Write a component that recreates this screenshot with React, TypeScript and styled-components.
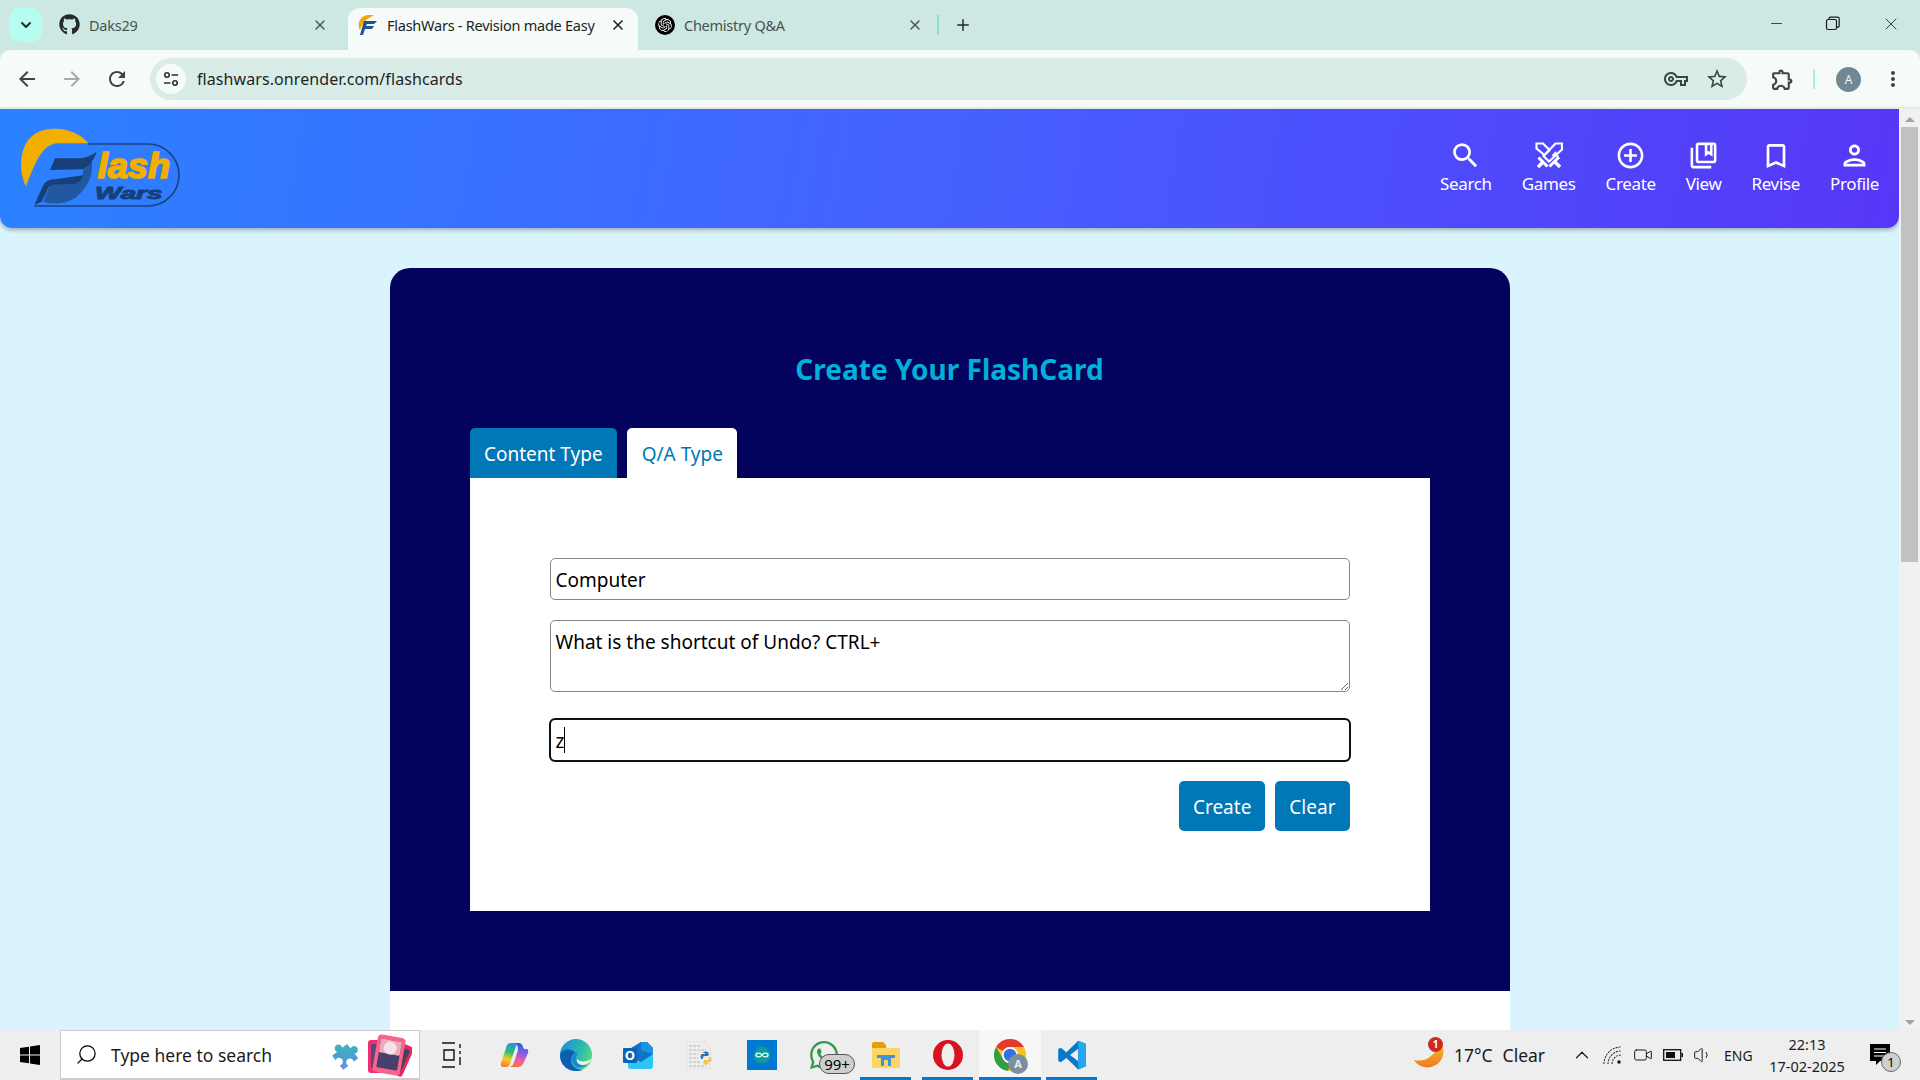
import React, { FunctionComponent, ReactNode } from 'react';
import styled, { createGlobalStyle } from 'styled-components';
import {
  MdAddCircleOutline, MdArrowBack, MdArrowForward, MdBookmarkBorder, MdOutlineCollectionsBookmark,
  MdOutlineExtension, MdOutlinePerson, MdOutlineVpnKey, MdMoreVert, MdRefresh, MdSearch, MdStarBorder,
} from 'react-icons/md';
import { FaGithub, FaWhatsapp } from 'react-icons/fa';
import { SiOpenai } from 'react-icons/si';
import {
  ChevronDown, ChevronUp, Minus, Plus, Search as SearchIcon, Video, Volume1, X,
} from 'lucide-react';

const uiFont = '"Noto Sans", "Open Sans", Arial, sans-serif';

const GlobalStyle = createGlobalStyle`
  html, body {
    margin: 0;
    padding: 0;
    overflow: hidden;
    font-family: ${uiFont};
  }
  * { box-sizing: border-box; }
`;

const Screen = styled.div`
  width: 1920px;
  height: 1080px;
  display: flex;
  flex-direction: column;
  overflow: hidden;
  background: #cde8e2;
`;

/* Browser chrome */
const TabStrip = styled.div`
  height: 50px;
  flex: none;
  display: flex;
  align-items: flex-end;
  padding-left: 9px;
  color: #1f2d2a;
`;

const TabListButton = styled.div`
  width: 33px;
  height: 34px;
  margin-bottom: 8px;
  margin-right: 5px;
  border-radius: 10px;
  background: #b6fdf1;
  display: flex;
  align-items: center;
  justify-content: center;
`;

const Tab = styled.div<{ $active?: boolean; $width: number; $left: number; $right: number }>`
  width: ${(p) => p.$width}px;
  height: 42px;
  display: flex;
  align-items: center;
  padding: 0 ${(p) => p.$right}px 9px ${(p) => p.$left}px;
  border-radius: 12px 12px 0 0;
  background: ${(p) => (p.$active ? '#f6fbf9' : 'transparent')};
  font-size: 14.5px;
  letter-spacing: -0.25px;
  color: ${(p) => (p.$active ? '#1c2422' : '#46544f')};
`;

const TabTitle = styled.span`
  flex: 1;
  margin-left: 9px;
  white-space: nowrap;
`;

const TabDivider = styled.div`
  width: 2px;
  height: 20px;
  margin: 0 15px 15px 3px;
  background: #8fdcd2;
`;

const NewTab = styled.div`
  margin-bottom: 16px;
  display: flex;
`;

const WindowControls = styled.div`
  margin-left: auto;
  height: 47px;
  align-self: flex-start;
  display: flex;
  align-items: center;
  gap: 40px;
  padding-right: 19px;
`;

const RestoreIcon = () => (
  <svg width="16" height="16" viewBox="0 0 16 16" fill="none" stroke="#1b1b1b" strokeWidth="1.2">
    <rect x="1.5" y="3.5" width="10" height="10" rx="1.5" />
    <path d="M4 3.2V2.6a1.4 1.4 0 0 1 1.4-1.4h7.2a1.6 1.6 0 0 1 1.6 1.6v7a1.4 1.4 0 0 1-1.4 1.4H12" />
  </svg>
);

const Toolbar = styled.div`
  height: 59px;
  flex: none;
  display: flex;
  align-items: flex-start;
  padding: 8px 0 0 15px;
  background: #f6fbf9;
  border-radius: 10px 10px 0 0;
  border-bottom: 2px solid #e3e9e7;
`;

const NavIcons = styled.div`
  width: 135px;
  height: 42px;
  flex: none;
  display: flex;
  align-items: center;
  gap: 21px;
`;

const Omnibox = styled.div`
  width: 1597px;
  height: 42px;
  flex: none;
  display: flex;
  align-items: center;
  padding: 0 18px 0 6px;
  border-radius: 21px;
  background: #daece7;
`;

const SiteInfo = styled.div`
  width: 30px;
  height: 30px;
  flex: none;
  border-radius: 50%;
  background: #f6fbf9;
  display: flex;
  align-items: center;
  justify-content: center;
`;

const UrlText = styled.span`
  margin-left: 11px;
  flex: 1;
  font-size: 16px;
  letter-spacing: 0.08px;
  color: #1d2523;
`;

const OmniboxIcons = styled.div`
  display: flex;
  align-items: center;
  gap: 17px;
  color: #3b4643;
`;

const ToolbarEnd = styled.div`
  flex: 1;
  height: 42px;
  display: flex;
  align-items: center;
  padding-left: 23px;
  color: #3b4643;
`;

const ToolDivider = styled.div`
  width: 2px;
  height: 20px;
  margin: 0 21px 0 18px;
  background: #a5efe4;
`;

const Avatar = styled.div`
  width: 25px;
  height: 25px;
  margin-right: 20px;
  border-radius: 50%;
  background: #6f8893;
  color: #f0f4f4;
  font-size: 12px;
  display: flex;
  align-items: center;
  justify-content: center;
`;

const SiteTuneIcon = () => (
  <svg width="18" height="18" viewBox="0 0 18 18" fill="none" stroke="#27302e" strokeWidth="1.6">
    <circle cx="5" cy="5" r="2.2" />
    <path d="M9.5 5H16M2 13h6.5" />
    <circle cx="13" cy="13" r="2.2" />
  </svg>
);

const FlashFavicon = () => (
  <svg width="20" height="24" viewBox="0 0 20 24">
    <path d="M2 17A10 10 0 0 1 10 2h6l-5 3Q6 7 2 17z" fill="#eeaa0c" />
    <path d="M6 8h13l-3 3H9l-1 2h8l-2 3H7l-2 6H2z" fill="#1d5198" />
  </svg>
);

/* Web page */
const Viewport = styled.div`
  flex: 1;
  min-height: 0;
  display: flex;
  background: #d9f4fc;
`;

const Page = styled.div`
  flex: 1;
  min-width: 0;
  overflow: hidden;
`;

const Header = styled.header`
  height: 119px;
  display: flex;
  align-items: center;
  justify-content: space-between;
  padding: 0 20px 2px 16px;
  border-radius: 0 0 12px 12px;
  background: linear-gradient(100deg, #2b82ff 0%, #4560ff 50%, #5637f7 100%);
  box-shadow: 0 2px 4px rgba(0, 0, 0, 0.3);
`;

const NavList = styled.nav`
  display: flex;
  gap: 30px;
`;

const NavItem = styled.div`
  display: flex;
  flex-direction: column;
  align-items: center;
  color: #fff;
  font-size: 17px;
  line-height: 24px;
  letter-spacing: -0.35px;
`;

const NavGlyph = styled.span`
  height: 33px;
  display: flex;
  align-items: center;
  justify-content: center;
`;

const SwordsIcon = () => (
  <svg width="28" height="28" viewBox="0 0 28 28" fill="none" stroke="#fff" strokeWidth="2.2">
    <path d="M27 1.500h-6.500L8.500 14l5.500 5.500L27 7.500z" />
    <path d="M1.500 1.500h6.500l6.500 6.500-5 5-8-6.500z" />
    <path d="M17.500 14l3-3 3.500 6" />
    <path d="M3.500 15.500l9 9M23.500 15.500l-9 9" strokeWidth="3" />
    <path d="M8 20l-5 5M20 20l5 5" strokeWidth="3.400" />
  </svg>
);

/* drawn on the 3x grid of a 200x110 crop: one unit is a third of a pixel */
const LogoMark = () => (
  <svg width="167" height="85" viewBox="48 45 501 255">
    <path d="M78 228C50 170 55 55 165 56C210 56 245 75 265 100L170 100C125 105 105 160 78 228Z" fill="#f2af00" />
    <path d="M265 102H444A93 93 0 0 1 444 288H103" fill="none" stroke="#1a4480" strokeWidth="5" />
    <path d="M130 275L150 225L225 222Q248 205 250 180Q265 170 275 150Q285 215 225 265Q180 290 130 275Z" fill="#22589f" />
    <path d="M165 145L240 145Q270 140 290 125Q280 160 250 178L150 180Z" fill="#173f7a" />
    <path d="M103 285L130 225Q140 208 165 208L250 196Q245 215 225 222L155 225Q145 228 140 245L125 275Z" fill="#173f7a" />
    <Wordmark x="293" y="205" fontSize="104" fill="#f2af00" stroke="#f2af00" strokeWidth="5" textLength="217" lengthAdjust="spacingAndGlyphs">lash</Wordmark>
    <Wordmark x="285" y="268" fontSize="52" fill="#173f7a" stroke="#173f7a" strokeWidth="3" textLength="202" lengthAdjust="spacingAndGlyphs">Wars</Wordmark>
  </svg>
);

const Wordmark = styled.text`
  font-family: "Liberation Sans", Arial, sans-serif;
  font-weight: 700;
  font-style: italic;
`;

const Card = styled.section`
  width: 1120px;
  margin: 40px auto 0;
  padding: 80px 80px 80px;
  border-radius: 20px 20px 0 0;
  background: #03035e;
`;

const Title = styled.h1`
  margin: 0 0 36px;
  height: 44px;
  line-height: 42px;
  text-align: center;
  font-size: 28px;
  font-weight: 700;
  color: #00b0d8;
`;

const TabRow = styled.div`
  display: flex;
  gap: 10px;
`;

const FormTab = styled.div<{ $active?: boolean }>`
  height: 50px;
  padding: 2px 14.500px 0;
  display: flex;
  align-items: center;
  border-radius: 5px 5px 0 0;
  font-size: 19px;
  background: ${(p) => (p.$active ? '#fff' : '#0077b6')};
  color: ${(p) => (p.$active ? '#0077b6' : '#fff')};
`;

const Panel = styled.div`
  padding: 80px;
  background: #fff;
`;

const Form = styled.form`
  display: flex;
  flex-direction: column;
`;

const FieldWrap = styled.div`
  position: relative;
  margin-bottom: 20px;
`;

const TextInput = styled.input<{ $focused?: boolean }>`
  display: block;
  width: 100%;
  height: 42px;
  padding: 2px 5px 0;
  border: 1px solid #858585;
  border-radius: 5px;
  font-family: ${uiFont};
  font-size: 19px;
  color: #000;
  outline: ${(p) => (p.$focused ? '2px solid #101010' : 'none')};
  outline-offset: -1px;
`;

const TextArea = styled.textarea`
  display: block;
  width: 100%;
  height: 72px;
  margin-bottom: 27px;
  padding: 8px 5px;
  border: 1px solid #858585;
  border-radius: 5px;
  font-family: ${uiFont};
  font-size: 19px;
  line-height: 26px;
  color: #000;
  outline: none;
`;

const Caret = styled.span`
  position: absolute;
  left: 14px;
  top: 8px;
  width: 1px;
  height: 26px;
  background: #000;
`;

const FormActions = styled.div`
  display: flex;
  justify-content: flex-end;
  gap: 10px;
`;

const ActionButton = styled.button`
  height: 50px;
  padding: 2px 14px 0;
  border: none;
  border-radius: 5px;
  background: #0077b6;
  color: #fff;
  font-family: ${uiFont};
  font-size: 19px;
`;

const BelowCard = styled.div`
  width: 1120px;
  height: 200px;
  margin: 0 auto;
  background: #fff;
`;

const ScrollBar = styled.div`
  width: 21px;
  flex: none;
  display: flex;
  flex-direction: column;
  align-items: center;
  background: #f1f1f1;
`;

const ScrollArrow = styled.div<{ $down?: boolean }>`
  margin: ${(p) => (p.$down ? 'auto 0 5px' : '8px 0 5px')};
  width: 0;
  height: 0;
  border-left: 5px solid transparent;
  border-right: 5px solid transparent;
  border-${(p) => (p.$down ? 'top' : 'bottom')}: 5px solid #a3a3a3;
`;

const ScrollThumb = styled.div`
  width: 17px;
  height: 435px;
  background: #c1c1c1;
`;

/* Taskbar */
const Taskbar = styled.footer`
  height: 50px;
  flex: none;
  display: flex;
  align-items: center;
  background: #eeeeee;
`;

const StartButton = styled.div`
  width: 60px;
  display: flex;
  justify-content: center;
`;

const SearchBox = styled.div`
  width: 360px;
  height: 50px;
  display: flex;
  align-items: center;
  padding-left: 14px;
  background: #fff;
  border: 1px solid #ccc;
  border-bottom-width: 2px;
`;

const SearchLabel = styled.span`
  margin-left: 13px;
  flex: 1;
  font-size: 17.5px;
  color: #1b1b1b;
`;

const SearchExtras = styled.div`
  display: flex;
  align-items: center;
  gap: 3px;
  padding-right: 7px;
`;

const TaskSlot = styled.div<{ $running?: boolean; $active?: boolean; $width?: number }>`
  position: relative;
  width: ${(p) => p.$width ?? 62}px;
  height: 50px;
  flex: none;
  display: flex;
  align-items: center;
  justify-content: center;
  background: ${(p) => (p.$active ? '#f7f7f7' : 'transparent')};

  &::after {
    content: '';
    display: ${(p) => (p.$running ? 'block' : 'none')};
    position: absolute;
    bottom: 0;
    left: ${(p) => (p.$active ? 0 : 5)}px;
    right: ${(p) => (p.$active ? 0 : 6)}px;
    height: 3px;
    background: #0078d4;
  }
`;

const WhatsBadge = styled.span`
  position: absolute;
  left: 26px;
  top: 24px;
  width: 36px;
  height: 20px;
  border-radius: 10px;
  border: 1px solid #555;
  background: #cfcfcf;
  color: #000;
  font-size: 15px;
  line-height: 18px;
  text-align: center;
`;

const ChromeBadge = styled.span`
  position: absolute;
  left: 29px;
  top: 24px;
  width: 20px;
  height: 20px;
  border-radius: 50%;
  background: #7d8f9c;
  color: #e9eef0;
  font-size: 11px;
  font-weight: 700;
  line-height: 20px;
  text-align: center;
`;

const Tray = styled.div`
  margin-left: auto;
  height: 50px;
  display: flex;
  align-items: center;
  color: #1b1b1b;
`;

const Weather = styled.div`
  position: relative;
  display: flex;
  align-items: center;
  width: 157px;
  font-size: 17.5px;
  gap: 10px;
`;

const WeatherBadge = styled.span`
  position: absolute;
  left: 14px;
  top: -3px;
  width: 15px;
  height: 15px;
  border-radius: 50%;
  background: #cc2a24;
  color: #fff;
  font-size: 10px;
  font-weight: 700;
  line-height: 15px;
  text-align: center;
`;

const TrayIcons = styled.div`
  display: flex;
  align-items: center;
  gap: 10px;
  width: 153px;
`;

const Lang = styled.span`
  font-size: 14px;
  width: 28px;
  margin-right: 17px;
`;

const Clock = styled.div`
  width: 76px;
  display: flex;
  flex-direction: column;
  align-items: center;
  font-size: 14.5px;
  line-height: 22px;
`;

const NoticeButton = styled.div`
  position: relative;
  width: 70px;
  margin-right: 5px;
  display: flex;
  justify-content: center;
`;

const NoticeCount = styled.span`
  position: absolute;
  left: 36px;
  top: 8px;
  width: 20px;
  height: 20px;
  border-radius: 50%;
  border: 1px solid #666;
  background: #cfcfcf;
  color: #000;
  font-size: 13px;
  line-height: 18px;
  text-align: center;
`;

const WindowsLogo = () => (
  <svg width="20" height="20" viewBox="0 0 20 20" fill="#000">
    <path d="M0 3l9-1.300V9.500H0zM10 1.500L20 0v9.500H10zM0 10.500h9v7.800L0 17zM10 10.500h10V20l-10-1.500z" />
  </svg>
);

const PuzzleIcon = () => (
  <svg width="36" height="36" viewBox="0 0 34 34">
    <defs>
      <linearGradient id="puzzleFill" x1="1" y1="0" x2="0" y2="1">
        <stop offset="0" stopColor="#35c9ae" />
        <stop offset="0.6" stopColor="#4a9fd0" />
        <stop offset="1" stopColor="#6d8fe0" />
      </linearGradient>
    </defs>
    <path
      transform="rotate(-38 17 17)"
      d="M7 10h6a3.500 3.500 0 1 1 6 0h6v5.500a3.500 3.500 0 1 1 0 6V27h-5.500a3.500 3.500 0 1 0-6 0H7v-5.500a3.500 3.500 0 1 0 0-6z"
      fill="url(#puzzleFill)"
    />
  </svg>
);

const PinkCards = () => (
  <svg width="46" height="44" viewBox="0 0 46 44">
    <g transform="rotate(24 31 25)">
      <rect x="19" y="9" width="24" height="32" rx="3" fill="#e8295a" />
      <rect x="27" y="13" width="13" height="24" fill="#4b3f66" />
    </g>
    <rect x="2" y="7" width="22" height="33" rx="3" fill="#ee2f72" />
    <rect x="5" y="11" width="16" height="24" fill="#5c4970" />
    <g transform="rotate(10 23 22)">
      <rect x="9" y="3" width="28" height="38" rx="4" fill="#f8648c" />
      <rect x="12.500" y="7" width="21" height="29" rx="1" fill="#47406a" />
      <rect x="12.500" y="7" width="21" height="14" rx="1" fill="#f3a8bd" />
      <circle cx="23" cy="15" r="6.500" fill="#f3e4ea" />
    </g>
  </svg>
);

const TaskViewIcon = () => (
  <svg width="20" height="26" viewBox="0 0 20 26" fill="none" stroke="#111" strokeWidth="1.4">
    <path d="M0 1h13M0 25h13M2 8h10v10H2zM18 2v4M18 9v3M18 15v8" />
  </svg>
);

const CopilotIcon = () => (
  <svg width="29" height="26" viewBox="0 0 29 26">
    <defs>
      <linearGradient id="copLeft" x1="0.600" y1="0" x2="0.400" y2="1">
        <stop offset="0" stopColor="#2b8ff0" />
        <stop offset="0.400" stopColor="#30c070" />
        <stop offset="0.700" stopColor="#f5d020" />
        <stop offset="1" stopColor="#f08030" />
      </linearGradient>
      <linearGradient id="copRight" x1="0.600" y1="0" x2="0.400" y2="1">
        <stop offset="0" stopColor="#1f62d8" />
        <stop offset="0.400" stopColor="#8a5ae8" />
        <stop offset="0.750" stopColor="#f2629a" />
        <stop offset="1" stopColor="#f5703a" />
      </linearGradient>
    </defs>
    <path d="M11 1H20Q16 2 15 7L10 22Q9 25 6 25H3Q0 25 1 21L6 6Q7 1 11 1Z" fill="url(#copLeft)" />
    <path d="M15 1H19Q22 1 23 5L24 7H26Q29 7 28 11L24 20Q22 25 18 25H10Q13 24 14 20L18 8Q18 2 15 1Z" fill="url(#copRight)" />
  </svg>
);

const EdgeIcon = () => (
  <svg width="32" height="32" viewBox="0 0 32 32">
    <defs>
      <linearGradient id="edgeTop" x1="0" y1="0.300" x2="1" y2="0.700">
        <stop offset="0" stopColor="#1c93cf" />
        <stop offset="0.600" stopColor="#2cbcb0" />
        <stop offset="1" stopColor="#5fdc72" />
      </linearGradient>
    </defs>
    <circle cx="16" cy="16" r="16" fill="url(#edgeTop)" />
    <path d="M0 16Q0 27 10 31Q16 33 23 31Q17 31 13 27Q8 20 15 13Q8 8 3 12Q0 14 0 16Z" fill="#0c5fb0" />
    <path d="M15 13Q9 20 14 26Q19 31 27 26Q20 27 17 23Q14 18 18 15Z" fill="#1b86d4" />
    <path d="M17 20Q22 25 31 20L30 23Q24 28 19 25Q16 23 17 20Z" fill="#eeeeee" />
  </svg>
);

const OutlookIcon = () => (
  <svg width="31" height="27" viewBox="0 0 31 27">
    <path d="M5 8L18 0L30 8V24Q30 27 27 27H8Q5 27 5 24Z" fill="#2fc4f6" />
    <path d="M5 8L18 0L24 0L30 6V12L18 20L5 14Z" fill="#1272c4" />
    <path d="M18 0H24L30 6V12L18 8Z" fill="#1c93e0" />
    <rect x="0" y="6" width="14" height="15" rx="1" fill="#0b62b8" />
    <OutlookLetter x="7" y="18" textAnchor="middle">O</OutlookLetter>
  </svg>
);

const OutlookLetter = styled.text`
  font-family: ${uiFont};
  font-size: 13px;
  font-weight: 700;
  fill: #fff;
`;

const PythonFileIcon = () => (
  <svg width="28" height="28" viewBox="0 0 28 28">
    <path d="M0 0H18L24 6V28H0Z" fill="#ededed" stroke="#dddddd" />
    <path d="M3 5H14M3 9H20M3 13H12M3 17H12M3 21H14M3 25H20" stroke="#c9c9c9" strokeWidth="1.500" strokeDasharray="3 1" />
    <g transform="translate(13 10) scale(0.5)">
      <path d="M8 10h4v2H6q-3 0-3 5t3 5h2v-3q0-3 3-3h6q2 0 2-2v-4q0-3-6-3-5 0-5 3z" fill="#2f72ad" transform="translate(0 -6)" />
      <path d="M20 26h-4v-2h6q3 0 3-5t-3-5h-2v3q0 3-3 3H11q-2 0-2 2v4q0 3 6 3 5 0 5-3z" fill="#f2c93a" transform="translate(0 -2)" />
    </g>
  </svg>
);

const ArduinoIcon = () => (
  <svg width="30" height="30" viewBox="0 0 30 30">
    <rect width="30" height="30" fill="#0078d4" />
    <circle cx="15" cy="15" r="8.500" fill="#0f9a9e" />
    <path d="M15 15c-2-3-6-2-6 0s4 3 6 0c2-3 6-2 6 0s-4 3-6 0z" fill="none" stroke="#eaffff" strokeWidth="1.300" />
  </svg>
);

const FolderIcon = () => (
  <svg width="28" height="26" viewBox="0 0 28 26">
    <path d="M0 2q0-2 2-2h9l3 3v5H0z" fill="#e1a206" />
    <path d="M0 6h27q1 0 1 1v17q0 2-2 2H1q-1 0-1-1z" fill="#fbd667" />
    <path d="M9 24v-7q0-2 2-2h6q2 0 2 2v7h-3v-6h-4v6z" fill="#3f93d8" />
    <rect x="5" y="13" width="18" height="3" fill="#3f93d8" />
  </svg>
);

const OperaIcon = () => (
  <svg width="30" height="30" viewBox="0 0 30 30">
    <circle cx="15" cy="15" r="15" fill="#d8121f" />
    <ellipse cx="15" cy="15" rx="6.500" ry="11.500" fill="#eeeeee" />
  </svg>
);

const ChromeIcon = () => (
  <svg width="32" height="32" viewBox="0 0 48 48">
    <circle cx="24" cy="24" r="24" fill="#fbc116" />
    <path d="M3.200 12A24 24 0 0 1 44.800 12H24A12 12 0 0 0 13.600 18z" fill="#e33b2e" />
    <path d="M3.200 12L13.600 30A12 12 0 0 0 27 35.600L20.500 47.800A24 24 0 0 1 3.200 12z" fill="#2f9e44" />
    <circle cx="24" cy="24" r="12" fill="#fff" />
    <circle cx="24" cy="24" r="9.500" fill="#2f73e0" />
  </svg>
);

const VsCodeIcon = () => (
  <svg width="30" height="30" viewBox="0 0 24 24">
    <path d="M17 0.500L7.500 9.700 3 6.200 1 7.200v9.600l2 1 4.500-3.500L17 23.500l6-2.500V3zM17 7v10l-6.500-5z" fill="#0a78c9" fillRule="evenodd" />
    <path d="M17 0.500L23 3v18l-6 2.500z" fill="#25a7ee" />
  </svg>
);

const MoonIcon = () => (
  <svg width="30" height="30" viewBox="0 0 30 30">
    <defs>
      <linearGradient id="moon" x1="0" y1="0" x2="0" y2="1">
        <stop offset="0" stopColor="#f8c12c" />
        <stop offset="1" stopColor="#ee7a1f" />
      </linearGradient>
    </defs>
    <path d="M27 3A14 14 0 0 1 0 20Q10 22 17 16 23 11 27 3z" fill="url(#moon)" />
  </svg>
);

const WifiIcon = () => (
  <svg width="20" height="20" viewBox="0 0 20 20" fill="none" stroke="#333" strokeWidth="1.100">
    <path d="M1 19A17 17 0 0 1 18 2M5 19A13 13 0 0 1 18 6M9 19a9 9 0 0 1 9-9" strokeDasharray="2 1" />
    <circle cx="16" cy="17" r="1.700" fill="#111" stroke="none" />
  </svg>
);

const BatteryIcon = () => (
  <svg width="20" height="14" viewBox="0 0 20 14">
    <rect x="0.700" y="1.700" width="17" height="10.600" fill="none" stroke="#111" strokeWidth="1.300" />
    <rect x="3" y="4" width="9" height="6" fill="#111" />
    <rect x="18.500" y="5" width="1.500" height="4" fill="#111" />
  </svg>
);

const NoticeIcon = () => (
  <svg width="20" height="22" viewBox="0 0 20 22">
    <path d="M0 0h20v17H10l-4 4v-4H0z" fill="#000" />
    <path d="M4 5h12M4 8.500h12M4 12h12" stroke="#fff" strokeWidth="1.200" />
  </svg>
);

type NavEntry = { label: string; icon: ReactNode };

const navEntries: NavEntry[] = [
  { label: 'Search', icon: <MdSearch size={33} /> },
  { label: 'Games', icon: <SwordsIcon /> },
  { label: 'Create', icon: <MdAddCircleOutline size={31} /> },
  { label: 'View', icon: <MdOutlineCollectionsBookmark size={31} /> },
  { label: 'Revise', icon: <MdBookmarkBorder size={32} /> },
  { label: 'Profile', icon: <MdOutlinePerson size={33} /> },
];

const App: FunctionComponent = () => (
  <Screen>
    <GlobalStyle />
    <TabStrip>
      <TabListButton><ChevronDown size={16} strokeWidth={3} /></TabListButton>
      <Tab $width={301} $left={12} $right={20}>
        <FaGithub size={21} color="#24292f" />
        <TabTitle>Daks29</TabTitle>
        <X size={16} strokeWidth={2} />
      </Tab>
      <Tab $active $width={290} $left={10} $right={12}>
        <FlashFavicon />
        <TabTitle>FlashWars - Revision made Easy</TabTitle>
        <X size={16} strokeWidth={2.500} />
      </Tab>
      <Tab $width={296} $left={17} $right={11}>
        <SiOpenai size={20} color="#fff" style={{ background: '#000', borderRadius: '50%', padding: 3 }} />
        <TabTitle>Chemistry Q&amp;A</TabTitle>
        <X size={16} strokeWidth={2} />
      </Tab>
      <TabDivider />
      <NewTab><Plus size={18} strokeWidth={2} /></NewTab>
      <WindowControls>
        <Minus size={17} strokeWidth={1.200} />
        <RestoreIcon />
        <X size={20} strokeWidth={1.100} />
      </WindowControls>
    </TabStrip>

    <Toolbar>
      <NavIcons>
        <MdArrowBack size={24} color="#3b4643" />
        <MdArrowForward size={24} color="#a3adaa" />
        <MdRefresh size={24} color="#3b4643" />
      </NavIcons>
      <Omnibox>
        <SiteInfo><SiteTuneIcon /></SiteInfo>
        <UrlText>flashwars.onrender.com/flashcards</UrlText>
        <OmniboxIcons>
          <MdOutlineVpnKey size={24} />
          <MdStarBorder size={24} />
        </OmniboxIcons>
      </Omnibox>
      <ToolbarEnd>
        <MdOutlineExtension size={25} />
        <ToolDivider />
        <Avatar>A</Avatar>
        <MdMoreVert size={24} />
      </ToolbarEnd>
    </Toolbar>

    <Viewport>
      <Page>
        <Header>
          <LogoMark />
          <NavList>
            {navEntries.map((entry) => (
              <NavItem key={entry.label}>
                <NavGlyph>{entry.icon}</NavGlyph>
                {entry.label}
              </NavItem>
            ))}
          </NavList>
        </Header>

        <Card>
          <Title>Create Your FlashCard</Title>
          <TabRow>
            <FormTab>Content Type</FormTab>
            <FormTab $active>Q/A Type</FormTab>
          </TabRow>
          <Panel>
            <Form>
              <FieldWrap>
                <TextInput type="text" value="Computer" readOnly />
              </FieldWrap>
              <TextArea value="What is the shortcut of Undo? CTRL+" readOnly />
              <FieldWrap>
                <TextInput type="text" value="z" readOnly $focused />
                <Caret />
              </FieldWrap>
              <FormActions>
                <ActionButton type="button">Create</ActionButton>
                <ActionButton type="button">Clear</ActionButton>
              </FormActions>
            </Form>
          </Panel>
        </Card>
        <BelowCard />
      </Page>
      <ScrollBar>
        <ScrollArrow />
        <ScrollThumb />
        <ScrollArrow $down />
      </ScrollBar>
    </Viewport>

    <Taskbar>
      <StartButton><WindowsLogo /></StartButton>
      <SearchBox>
        <SearchIcon size={23} strokeWidth={1.300} style={{ transform: 'scaleX(-1)' }} />
        <SearchLabel>Type here to search</SearchLabel>
        <SearchExtras>
          <PuzzleIcon />
          <PinkCards />
        </SearchExtras>
      </SearchBox>
      <TaskSlot $width={63}><TaskViewIcon /></TaskSlot>
      <TaskSlot><CopilotIcon /></TaskSlot>
      <TaskSlot><EdgeIcon /></TaskSlot>
      <TaskSlot><OutlookIcon /></TaskSlot>
      <TaskSlot><PythonFileIcon /></TaskSlot>
      <TaskSlot><ArduinoIcon /></TaskSlot>
      <TaskSlot>
        <FaWhatsapp size={32} color="#2b9d4b" />
        <WhatsBadge>99+</WhatsBadge>
      </TaskSlot>
      <TaskSlot $running><FolderIcon /></TaskSlot>
      <TaskSlot $running><OperaIcon /></TaskSlot>
      <TaskSlot $running $active>
        <ChromeIcon />
        <ChromeBadge>A</ChromeBadge>
      </TaskSlot>
      <TaskSlot $running><VsCodeIcon /></TaskSlot>
      <Tray>
        <Weather>
          <MoonIcon />
          <WeatherBadge>1</WeatherBadge>
          <span>17°C</span>
          <span>Clear</span>
        </Weather>
        <TrayIcons>
          <ChevronUp size={22} strokeWidth={1.300} />
          <WifiIcon />
          <Video size={20} strokeWidth={1.200} />
          <BatteryIcon />
          <Volume1 size={20} strokeWidth={1.200} />
        </TrayIcons>
        <Lang>ENG</Lang>
        <Clock>
          <span>22:13</span>
          <span>17-02-2025</span>
        </Clock>
        <NoticeButton>
          <NoticeIcon />
          <NoticeCount>1</NoticeCount>
        </NoticeButton>
      </Tray>
    </Taskbar>
  </Screen>
);

export default App;
